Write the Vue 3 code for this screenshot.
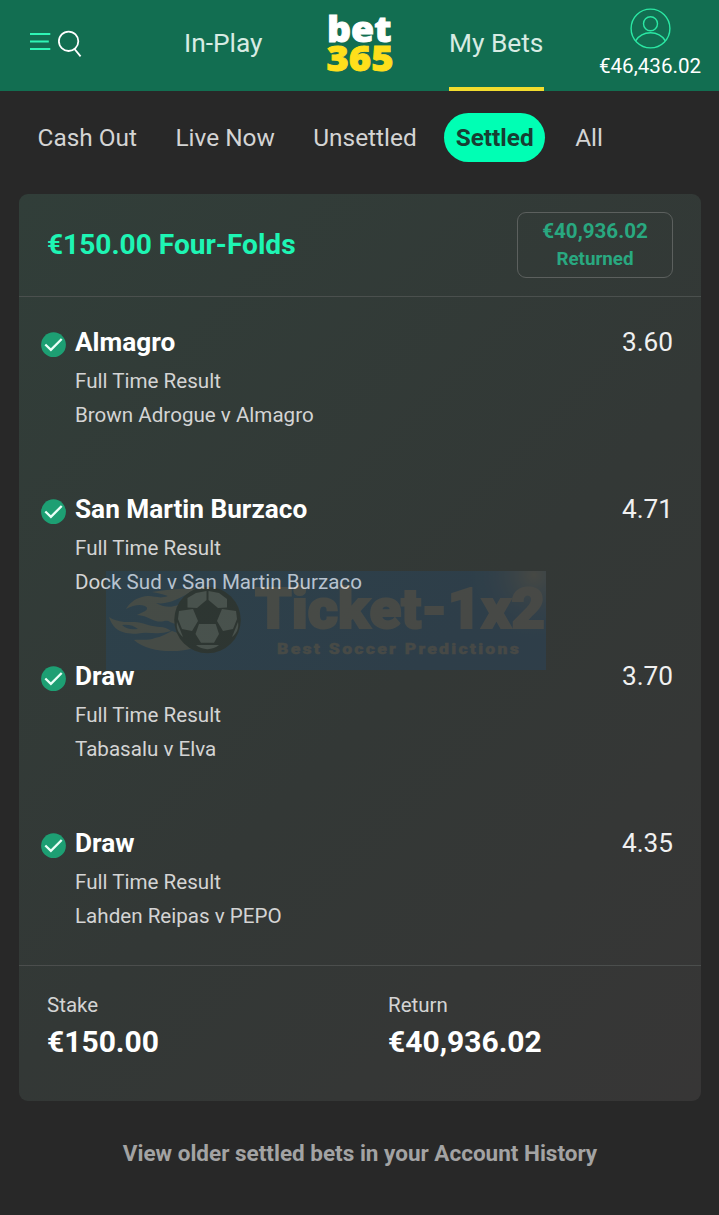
<template>
  <div class="page">
    <header class="topbar">
      <div class="tools">
        <svg width="54" height="30" viewBox="0 0 54 30">
          <g stroke="#2ff5b5" stroke-width="2">
            <path d="M0 4H20.3M0 11.6H18.8M0 19H20.3" />
          </g>
          <g fill="none" stroke="#fff" stroke-width="1.8">
            <circle cx="38.6" cy="11.3" r="9.7" />
            <path d="M44.5 19L50.6 26.300" />
          </g>
        </svg>
      </div>
      <a class="nav">In-Play</a>
      <svg class="logo" width="70" height="64" viewBox="0 0 70 64">
        <text x="2" y="30.700" fill="#fff" stroke="#fff" textLength="64.500" lengthAdjust="spacingAndGlyphs">bet</text>
        <text x="1.500" y="60.300" fill="#ffdf1b" stroke="#ffdf1b" textLength="67" lengthAdjust="spacingAndGlyphs">365</text>
      </svg>
      <a class="nav active">My Bets</a>
      <div class="account">
        <svg width="42" height="42" viewBox="0 0 42 42" fill="none" stroke="#2be8a4" stroke-width="1.4">
          <circle cx="21.500" cy="20.500" r="19.4" />
          <circle cx="21.500" cy="15.7" r="7" />
          <path d="M6.5 33C10 27.500 15.5 24.8 21.5 24.8S33 27.500 36.500 33" />
        </svg>
        <span class="balance">€46,436.02</span>
      </div>
    </header>

    <nav class="tabs">
      <span v-for="tab in tabs" :key="tab" class="tab" :class="{ selected: tab === current }" @click="current = tab">{{ tab }}</span>
    </nav>

    <section class="card">
      <div class="card-head">
        <h2>€150.00 Four-Folds</h2>
        <div class="returned">
          <span class="amount">€40,936.02</span>
          <span class="label">Returned</span>
        </div>
      </div>

      <div v-for="(bet, index) in bets" :key="index" class="bet">
        <svg class="check" width="26" height="26" viewBox="0 0 26 26">
          <circle cx="13.500" cy="12.700" r="12.4" fill="#1d9f73" />
          <path d="M5.300 12.500L10.900 17.900L21.700 7" fill="none" stroke="#e9fff7" stroke-width="2.300" />
        </svg>
        <div class="info">
          <h3>{{ bet.pick }}</h3>
          <p>Full Time Result</p>
          <p>{{ bet.match }}</p>
        </div>
        <span class="odds">{{ bet.odds }}</span>
      </div>

      <div class="totals">
        <div>
          <p>Stake</p>
          <strong>€150.00</strong>
        </div>
        <div>
          <p>Return</p>
          <strong>€40,936.02</strong>
        </div>
      </div>

      <!-- Watermark -->
      <svg class="watermark" width="440" height="99" viewBox="0 0 440 99">
        <defs>
          <radialGradient id="glow" cx="428" cy="4" r="65" gradientUnits="userSpaceOnUse">
            <stop offset="0" stop-color="#b5a794" />
            <stop offset="0.35" stop-color="#8796a3" stop-opacity="0.6" />
            <stop offset="1" stop-color="#1767c2" stop-opacity="0" />
          </radialGradient>
        </defs>
        <rect width="440" height="99" fill="#1765b8" />
        <rect width="440" height="99" fill="url(#glow)" />
        <g fill="#b5b09a">
          <path d="M90 18C74 17 60 19 46 21C54 22 58 24 62 25C52 29 46 23 36 26C28 28 23 33 20 38C27 34 34 33 39 35C44 38 40 40 31 44C38 44 44 48 50 50C56 52 60 48 64 51L72 54V34C65 37 56 36 50 32C62 34 72 28 90 18Z" />
          <path fill-rule="evenodd" d="M3 46C6 55 11 60 20 62C28 63 30 63 36 62C46 61 52 64 65 60C58 54 50 57 42 54C32 50 25 51 18 51C12 50 7 49 3 46ZM16 54C21 53 28 54 32 58C25 59 20 58 16 54Z" />
          <path d="M28 69C34 68 42 70 49 67C55 66 60 63 66 60L72 62L88 77C72 82 42 82 28 69Z" />
        </g>
        <circle cx="101.500" cy="49" r="33.300" fill="#172419" />
        <g fill="#c5d8c8">
          <path d="M81.5 27L90 22L100.500 20V29L91 37L81.500 36.500Z" />
          <path d="M102.500 20L113 22L121 28V36.500L112 37L102.500 29Z" />
          <path d="M73 40L87 38L92 50L86 60L76 58L72 48Z" />
          <path d="M130 40L116 38L111 50L117 60L127 58L131 48Z" />
          <path d="M93 53H109.700L113 63L108 71.700H95L89.500 63Z" />
          <path d="M71 51L77 66C72 62 70 57 71 51Z" />
          <path d="M132 51L126 66C131 62 133 57 132 51Z" />
          <path d="M90 74H113C107 79.500 96 79.500 90 74Z" />
        </g>
        <g fill="#bcaea0" stroke="#bcaea0">
          <text class="brand" x="149" y="57" textLength="290" lengthAdjust="spacingAndGlyphs">Ticket-1x2</text>
          <text class="slogan" x="171" y="83" textLength="244" lengthAdjust="spacingAndGlyphs">Best Soccer Predictions</text>
        </g>
      </svg>
    </section>

    <p class="history">View older settled bets in your Account History</p>
  </div>
</template>

<script setup>
import { ref } from 'vue'

const tabs = ['Cash Out', 'Live Now', 'Unsettled', 'Settled', 'All']
const current = ref('Settled')

const bets = ref([
  { pick: 'Almagro', match: 'Brown Adrogue v Almagro', odds: '3.60' },
  { pick: 'San Martin Burzaco', match: 'Dock Sud v San Martin Burzaco', odds: '4.71' },
  { pick: 'Draw', match: 'Tabasalu v Elva', odds: '3.70' },
  { pick: 'Draw', match: 'Lahden Reipas v PEPO', odds: '4.35' }
])
</script>

<style>
body {
  margin: 0;
  background: #282828;
}
</style>

<style scoped>
.page {
  width: 719px;
  height: 1215px;
  overflow: hidden;
  background: #282828;
  color: #d4d4d4;
  font-family: Roboto, sans-serif;
  white-space: nowrap;
}

h2,
h3,
p {
  margin: 0;
}

.topbar {
  display: grid;
  grid-template-columns: 154px 141px 124px 95px 1fr;
  height: 91px;
  padding-left: 30px;
  box-sizing: border-box;
  background: #126e51;
}

.tools {
  padding-top: 30px;
}

.nav {
  height: 87px;
  line-height: 86px;
  font-size: 26.3px;
  color: #d7ebe3;
}

.nav.active {
  border-bottom: 4px solid #f2dc2e;
}

.logo {
  margin-top: 11px;
  overflow: visible;
}

.logo text {
  font-family: "Open Sans", sans-serif;
  font-weight: 800;
  font-size: 35px;
  stroke-width: 0.9;
}

.account {
  display: flex;
  flex-direction: column;
  align-items: center;
  width: 102px;
  margin-left: 55px;
  padding-top: 8px;
}

.balance {
  font-size: 20.6px;
  line-height: 32px;
  color: #fff;
}

.tabs {
  display: flex;
  align-items: center;
  height: 49px;
  padding: 22px 0 32px 37.5px;
  font-size: 24.4px;
}

.tab {
  margin-right: 38.5px;
}

.tab.selected {
  margin: 0 30px 0 -11px;
  width: 101px;
  line-height: 50px;
  height: 49px;
  text-align: center;
  border-radius: 24.5px;
  background: #00ffb4;
  color: #173f33;
  font-weight: 700;
}

.card {
  position: relative;
  width: 682px;
  height: 907px;
  margin-left: 19px;
  border-radius: 9px;
  background: linear-gradient(135deg, #313e39 0%, #333836 55%, #373636 100%);
}

.card-head {
  display: flex;
  justify-content: space-between;
  align-items: center;
  height: 102px;
  padding: 0 28px;
  border-bottom: 1px solid #4b504e;
}

.card-head h2 {
  padding-bottom: 2px;
  font-size: 28.1px;
  color: #1ef5b4;
}

.returned {
  display: flex;
  flex-direction: column;
  justify-content: center;
  align-items: center;
  width: 154px;
  height: 64px;
  border: 1px solid #5c605e;
  border-radius: 9px;
  line-height: 28px;
  font-weight: 700;
  color: #29a880;
}

.amount {
  font-size: 20.6px;
}

.label {
  font-size: 18.8px;
}

.bet {
  display: flex;
  height: 142px;
  padding: 25px 28px 0 21px;
}

.check {
  margin: 10px 9px 0 0;
}

.info {
  flex: 1;
}

.info h3 {
  margin-bottom: 2px;
  font-size: 26.2px;
  line-height: 40px;
  color: #fff;
}

.info p {
  font-size: 20.6px;
  line-height: 34px;
}

.odds {
  font-size: 26.2px;
  line-height: 40px;
  color: #f0f0f0;
}

.totals {
  display: grid;
  grid-template-columns: 341px 1fr;
  padding: 22px 0 0 28px;
  border-top: 1px solid #4b4e4d;
}

.totals p {
  font-size: 20.5px;
  line-height: 34px;
}

.totals strong {
  display: block;
  font-size: 30px;
  line-height: 39px;
  color: #fff;
}

.watermark {
  position: absolute;
  left: 87px;
  top: 377px;
  overflow: visible;
  opacity: 0.15;
}

.brand {
  font-family: Roboto, sans-serif;
  font-weight: 900;
  font-size: 56px;
  stroke-width: 2;
}

.slogan {
  font-family: Roboto, sans-serif;
  font-weight: 900;
  font-size: 15.5px;
  letter-spacing: 2px;
  stroke-width: 0.4;
}

.history {
  padding: 34px 0 0 1px;
  font-size: 22.5px;
  line-height: 37px;
  font-weight: 700;
  text-align: center;
  color: #a3a3a3;
}
</style>
